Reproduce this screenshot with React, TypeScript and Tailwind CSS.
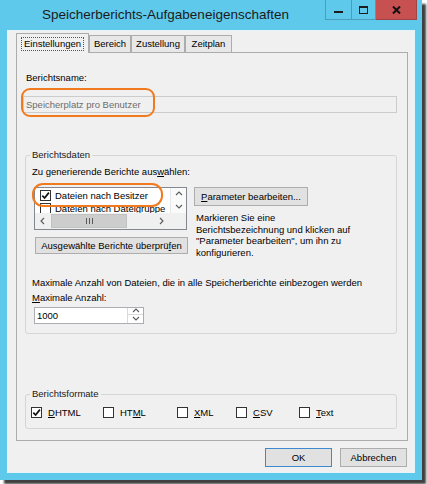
import React from "react";

function CheckBox({ checked }: { checked?: boolean }) {
  return (
    <div className="w-[11px] h-[11px] border border-[#333333] bg-white flex items-center justify-center shrink-0">
      {checked && (
        <svg width="9" height="9" viewBox="0 0 9 9">
          <path d="M1.3 4.6 L3.6 7 L7.9 1.6" fill="none" stroke="#111111" strokeWidth="1.7" />
        </svg>
      )}
    </div>
  );
}

function Chevron({ dir }: { dir: "up" | "down" | "left" | "right" }) {
  const d =
    dir === "up"
      ? "M1 5 L4 2 L7 5"
      : dir === "down"
      ? "M1 2 L4 5 L7 2"
      : dir === "left"
      ? "M5 1 L2 4 L5 7"
      : "M2 1 L5 4 L2 7";
  return (
    <svg width="8" height="8" viewBox="0 0 8 8">
      <path d={d} fill="none" stroke="#5a5a5a" strokeWidth="1.1" />
    </svg>
  );
}

function Btn({ children, w, h = "h-[19px]", primary }: { children: React.ReactNode; w: string; h?: string; primary?: boolean }) {
  return (
    <div
      className={`${w} ${h} flex items-center justify-center bg-[#e1e1e1] border ${
        primary ? "border-[#3d8ad0]" : "border-[#adadad]"
      } whitespace-nowrap`}
    >
      {children}
    </div>
  );
}

export default function App() {
  return (
    <div className="w-[427px] h-[484px] bg-white font-['Liberation_Sans',Arial,sans-serif] text-[9.5px] text-black leading-none">
      <div className="w-[422px] h-[480px] bg-[#5fc9ec] flex flex-col shadow-[4px_4px_2px_rgba(0,0,0,0.75)]">
        {/* Title bar */}
        <div className="h-[30px] flex shrink-0">
          <div className="flex-1 text-center pl-[6px] pt-[7px] text-[13.5px] leading-[16px] text-[#1b1b1b] whitespace-nowrap">
            Speicherberichts-Aufgabeneigenschaften
          </div>
          <div className="flex items-start mr-[5px]">
            <div className="w-[26px] h-[20px] border-l border-b border-[#4a9dbd] flex items-start justify-center">
              <div className="w-[9px] h-[2px] bg-[#1c1c1c] mt-[11px]" />
            </div>
            <div className="w-[25px] h-[20px] border-x border-b border-[#4a9dbd] flex items-center justify-center">
              <div className="w-[9px] h-[8px] border border-t-2 border-[#1c1c1c]" />
            </div>
            <div className="w-[41px] h-[20px] bg-[#c75050] border-b border-r border-[#a34343] flex items-center justify-center">
              <svg width="9" height="8" viewBox="0 0 9 8">
                <path d="M1 0.5 L8 7.5 M8 0.5 L1 7.5" stroke="#111111" strokeWidth="2" />
              </svg>
            </div>
          </div>
        </div>

        {/* Client */}
        <div className="flex-1 mx-[7px] mb-[7px] bg-[#f0f0f0] border border-[#e4f4fa] flex flex-col">
          {/* Tabs */}
          <div className="h-[21px] flex items-end pl-[8px] shrink-0">
            <div className="relative z-10 w-[73px] h-[20px] -mb-px bg-[#f0f0f0] border-x border-t border-[#acacac] flex items-start justify-center pt-[3px]">
              <div className="border border-dotted border-[#555555] px-[2px] h-[14px] leading-[12px]">Einstellungen</div>
            </div>
            <div className="w-[42px] h-[17px] bg-[#e8e8e8] border-x border-t border-[#acacac] flex items-center justify-center">Bereich</div>
            <div className="w-[54px] h-[17px] bg-[#e8e8e8] border-x border-t border-[#acacac] flex items-center justify-center">Zustellung</div>
            <div className="w-[47px] h-[17px] bg-[#e8e8e8] border-x border-t border-[#acacac] flex items-center justify-center">Zeitplan</div>
          </div>

          {/* Tab panel */}
          <div className="relative ml-[8px] w-[392px] h-[389px] border border-[#acacac] bg-[#f0f0f0] flex flex-col shrink-0">
            <div className="ml-[9px] mt-[19px] h-[12px] leading-[12px]">Berichtsname:</div>
            <div className="ml-[6px] mt-[12px] w-[374px] h-[17px] border border-[#cccccc] bg-[#f0f0f0] text-[#6d6d6d] pl-[2px] flex items-center">
              Speicherplatz pro Benutzer
            </div>

            {/* Berichtsdaten */}
            <div className="relative ml-[8px] mt-[42px] w-[372px] h-[179px] border border-[#d5d5d5] rounded-[3px] pl-[6px] flex flex-col">
              <div className="absolute left-[4px] -top-[7px] px-[2px] bg-[#f0f0f0] leading-[12px] text-[#1a1a1a]">Berichtsdaten</div>
              <div className="mt-[10px] h-[12px] leading-[12px]">
                Zu generierende Berichte aus<span className="underline">w</span>ählen:
              </div>
              <div className="mt-[9px] h-[67px] flex items-start">
                <div className="ml-[2px] w-[153px] flex flex-col">
                  {/* List box */}
                  <div className="w-[153px] h-[43px] border border-[#828790] bg-white flex flex-col">
                    <div className="flex h-[25px]">
                      <div className="flex-1 overflow-hidden pl-[5px] pt-[1px]">
                        <div className="h-[13px] flex items-center gap-[4px] whitespace-nowrap">
                          <CheckBox checked />
                          <span>Dateien nach Besitzer</span>
                        </div>
                        <div className="h-[13px] flex items-center gap-[4px] whitespace-nowrap">
                          <CheckBox />
                          <span>Dateien nach Dateigruppe</span>
                        </div>
                      </div>
                      <div className="w-[16px] flex flex-col bg-[#fafafa] border-l border-[#e6e6e6]">
                        <div className="h-[12px] flex items-center justify-center">
                          <Chevron dir="up" />
                        </div>
                        <div className="h-[13px] flex items-center justify-center">
                          <Chevron dir="down" />
                        </div>
                      </div>
                    </div>
                    <div className="h-[16px] flex bg-[#f0f0f0]">
                      <div className="w-[16px] flex items-center justify-center">
                        <Chevron dir="left" />
                      </div>
                      <div className="w-[76px] my-[1px] bg-[#cdcdcd] border border-[#c2c2c2] flex items-center justify-center gap-[2px]">
                        <div className="w-px h-[6px] bg-[#5a5a5a]" />
                        <div className="w-px h-[6px] bg-[#5a5a5a]" />
                        <div className="w-px h-[6px] bg-[#5a5a5a]" />
                      </div>
                      <div className="flex-1" />
                      <div className="w-[16px] flex items-center justify-center">
                        <Chevron dir="right" />
                      </div>
                      <div className="w-[16px] bg-[#f0f0f0]" />
                    </div>
                  </div>
                  <div className="mt-[7px] ml-px">
                    <Btn w="w-[153px]" h="h-[17px]">
                      Ausgewählte Berichte überprü<span className="underline">f</span>en
                    </Btn>
                  </div>
                </div>
                <div className="ml-[7px] flex flex-col">
                  <Btn w="w-[114px]">
                    <span className="underline">P</span>arameter bearbeiten...
                  </Btn>
                  <div className="mt-[6px] ml-[2px] leading-[11.7px] whitespace-nowrap">
                    Markieren Sie eine
                    <br />
                    Berichtsbezeichnung und klicken auf
                    <br />
                    "Parameter bearbeiten", um ihn zu
                    <br />
                    konfigurieren.
                  </div>
                </div>
              </div>
              <div className="mt-[21px] h-[15px] leading-[15px] whitespace-nowrap">
                Maximale Anzahl von Dateien, die in alle Speicherberichte einbezogen werden
              </div>
              <div className="h-[15px] leading-[15px]">
                <span className="underline">M</span>aximale Anzahl:
              </div>
              <div className="mt-[2px] ml-[2px] w-[110px] h-[17px] border border-[#abadb3] bg-white flex">
                <div className="flex-1 pl-[2px] flex items-center">1000</div>
                <div className="w-[16px] flex flex-col border-l border-[#d9d9d9]">
                  <div className="h-[7px] flex items-center justify-center border-b border-[#d9d9d9]">
                    <Chevron dir="up" />
                  </div>
                  <div className="flex-1 flex items-center justify-center">
                    <Chevron dir="down" />
                  </div>
                </div>
              </div>
            </div>

            {/* Berichtsformate */}
            <div className="relative ml-[8px] mt-[60px] w-[372px] h-[35px] border border-[#d5d5d5] rounded-[3px] pl-[5px] flex flex-col">
              <div className="absolute left-[4px] -top-[7px] px-[2px] bg-[#f0f0f0] leading-[12px] text-[#1a1a1a]">Berichtsformate</div>
              <div className="mt-[12px] flex items-center">
                <div className="w-[72px] flex items-center gap-[6px]">
                  <CheckBox checked />
                  <span>
                    <span className="underline">D</span>HTML
                  </span>
                </div>
                <div className="w-[74px] flex items-center gap-[6px]">
                  <CheckBox />
                  <span>
                    HT<span className="underline">M</span>L
                  </span>
                </div>
                <div className="w-[59px] flex items-center gap-[6px]">
                  <CheckBox />
                  <span>
                    <span className="underline">X</span>ML
                  </span>
                </div>
                <div className="w-[63px] flex items-center gap-[6px]">
                  <CheckBox />
                  <span>
                    <span className="underline">C</span>SV
                  </span>
                </div>
                <div className="flex items-center gap-[6px]">
                  <CheckBox />
                  <span>
                    <span className="underline">T</span>ext
                  </span>
                </div>
              </div>
            </div>

            {/* Orange annotations */}
            <div className="absolute left-[4px] top-[35px] w-[134px] h-[29px] border-2 border-[#f17a1f] rounded-[9px]" />
            <div className="absolute left-[15px] top-[130px] w-[131px] h-[24px] border-2 border-[#f17a1f] rounded-[11px]" />
          </div>

          {/* Dialog buttons */}
          <div className="mt-[7px] flex justify-end gap-[8px] pr-[7px]">
            <Btn w="w-[67px]" primary>
              OK
            </Btn>
            <Btn w="w-[67px]">Abbrechen</Btn>
          </div>
        </div>
      </div>
    </div>
  );
}
